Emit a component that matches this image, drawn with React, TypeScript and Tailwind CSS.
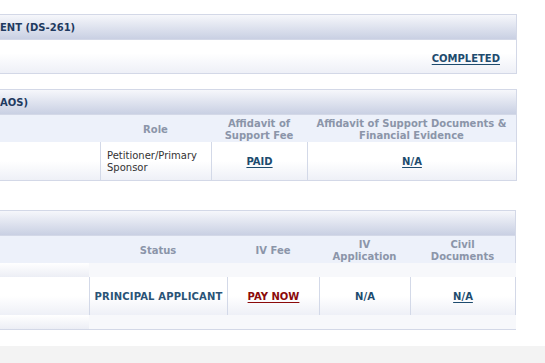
import React from 'react';

const font = "font-['Verdana','DejaVu_Sans',sans-serif]";

// shared header bar for each section
const SectionHeader: React.FC<{ title?: string }> = ({ title }) => (
  <div className="h-[26px] flex items-center border-t border-b border-r border-[#d3d8e7] bg-gradient-to-b from-[#f6f7fb] to-[#c9d0e3]">
    <span className="text-[10px] font-bold text-[#1f3a60] whitespace-nowrap">{title}</span>
  </div>
);

const ColHead: React.FC<{ w: string; children?: React.ReactNode }> = ({ w, children }) => (
  <div className={`${w} flex items-center justify-center pt-[2px] text-center text-[10px] leading-[12px] font-bold text-[#8b95a9]`}>
    {children}
  </div>
);

const Cell: React.FC<{ w: string; children?: React.ReactNode; first?: boolean; className?: string }> = ({ w, children, first, className }) => (
  <div
    className={`${w} flex items-center justify-center pt-[1px] text-[10px] bg-gradient-to-b from-white from-50% to-[#eef0f7] ${
      first ? '' : 'border-l border-[#d3d9e8]'
    } ${className ?? ''}`}
  >
    {children}
  </div>
);

export default function App() {
  return (
    <div className={`w-[545px] h-[363px] bg-white flex flex-col overflow-hidden ${font}`}>
      <div className="w-[517px] flex flex-col">
        {/* Choice of address and agent */}
        <div className="mt-[14px]">
          <SectionHeader title="ENT (DS-261)" />
          <div className="h-[34px] flex items-center justify-end pr-[16px] pt-[3px] border-b border-r border-[#d3d8e7] bg-gradient-to-b from-white from-40% to-[#eef0f7]">
            <a className="text-[10px] font-bold text-[#1d4b6e] underline underline-offset-2">COMPLETED</a>
          </div>
        </div>

        {/* Affidavit of support */}
        <div className="mt-[15px]">
          <SectionHeader title="AOS)" />
          <div className="h-[27px] flex bg-[#edf1fa] border-r border-[#d3d8e7]">
            <ColHead w="w-[100px]" />
            <ColHead w="w-[111px]">Role</ColHead>
            <ColHead w="w-[96px]">
              Affidavit of
              <br />
              Support Fee
            </ColHead>
            <ColHead w="flex-1">
              Affidavit of Support Documents &amp;
              <br />
              Financial Evidence
            </ColHead>
          </div>
          <div className="h-[39px] flex border-b border-r border-[#d3d8e7]">
            <Cell w="w-[100px]" first />
            <Cell w="w-[111px]" className="!justify-start pl-[6px] leading-[12px] text-[#333333]">
              Petitioner/Primary
              <br />
              Sponsor
            </Cell>
            <Cell w="w-[96px]">
              <a className="font-bold text-[#1d4b6e] underline underline-offset-2">PAID</a>
            </Cell>
            <Cell w="flex-1">
              <a className="font-bold text-[#1d4b6e] underline underline-offset-2">N/A</a>
            </Cell>
          </div>
        </div>

        {/* Immigrant visa */}
        <div className="mt-[29px] w-[516px]">
          <SectionHeader />
          <div className="h-[27px] flex bg-[#edf1fa] border-r border-[#d3d8e7]">
            <ColHead w="w-[89px]" />
            <ColHead w="w-[138px]">Status</ColHead>
            <ColHead w="w-[92px]">IV Fee</ColHead>
            <ColHead w="w-[91px]">
              IV
              <br />
              Application
            </ColHead>
            <ColHead w="flex-1">
              Civil
              <br />
              Documents
            </ColHead>
          </div>
          <div className="h-[14px] flex">
            <div className="w-[89px] bg-gradient-to-b from-white to-[#eceef5]" />
            <div className="flex-1 bg-[#f7f8fb]" />
          </div>
          <div className="h-[38px] flex border-r border-[#d3d8e7]">
            <Cell w="w-[89px]" first />
            <Cell w="w-[138px]">
              <span className="font-bold text-[#2a5377] tracking-[0.15px]">PRINCIPAL APPLICANT</span>
            </Cell>
            <Cell w="w-[92px]">
              <a className="font-bold text-[#8b0a0a] underline underline-offset-2">PAY NOW</a>
            </Cell>
            <Cell w="w-[91px]">
              <span className="font-bold text-[#1d4b6e]">N/A</span>
            </Cell>
            <Cell w="flex-1">
              <a className="font-bold text-[#1d4b6e] underline underline-offset-2">N/A</a>
            </Cell>
          </div>
          <div className="h-[15px] flex border-b border-[#d3d8e7]">
            <div className="w-[89px] bg-gradient-to-b from-white to-[#eceef5]" />
            <div className="flex-1 bg-[#f7f8fb]" />
          </div>
        </div>
      </div>
      <div className="mt-[16px] flex-1 bg-[#f3f3f3]" />
    </div>
  );
}
